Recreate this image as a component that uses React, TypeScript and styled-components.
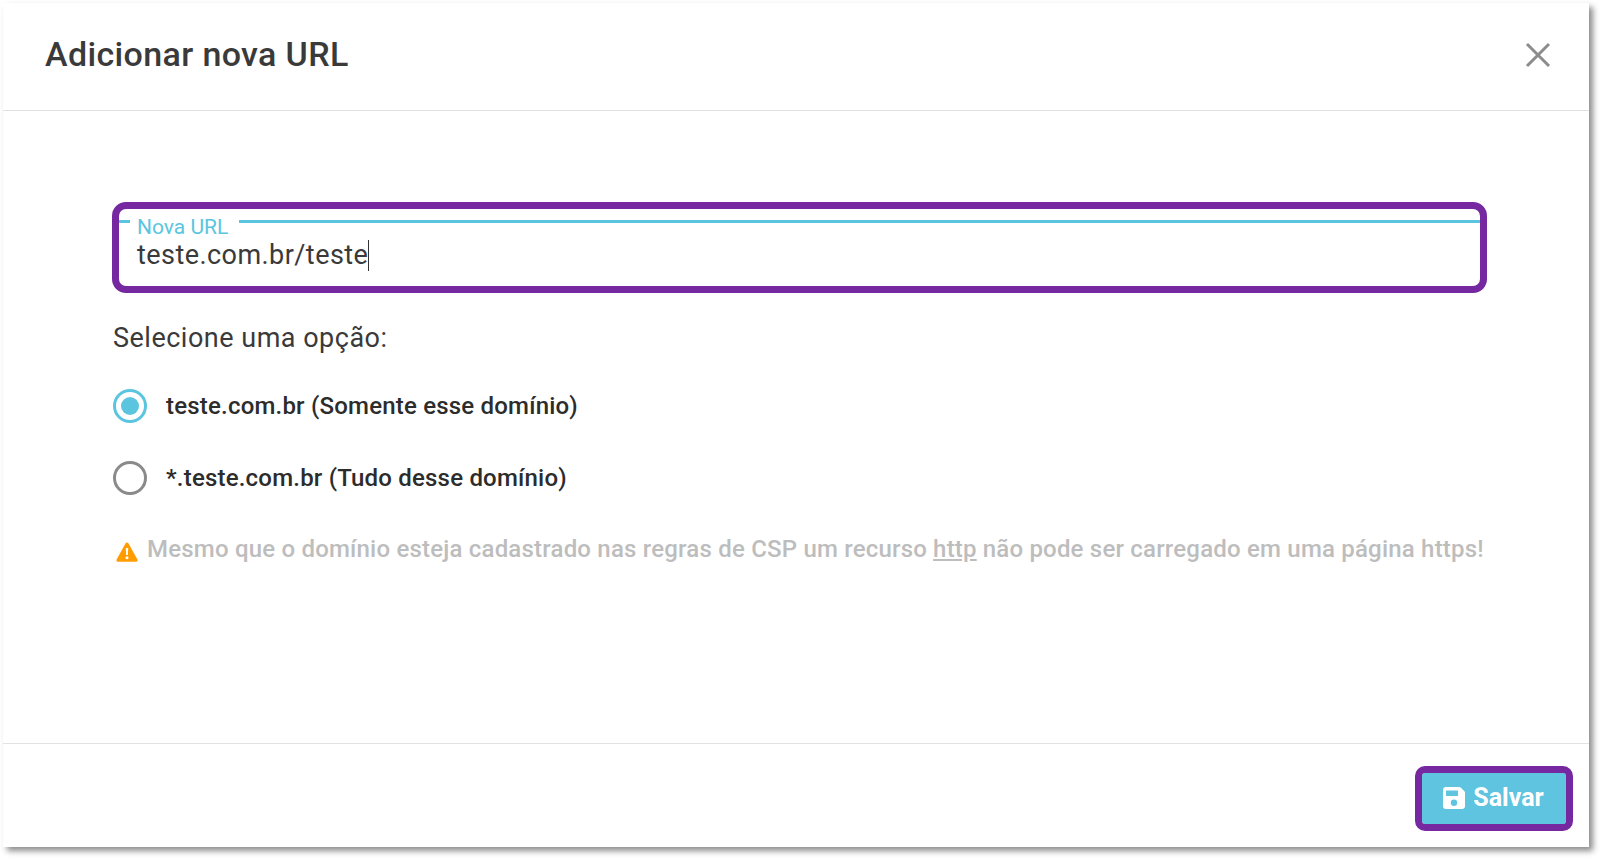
import styled, { createGlobalStyle } from 'styled-components';

const GlobalStyle = createGlobalStyle`
  html, body {
    margin: 0;
    padding: 0;
    background: #fff;
    font-family: Roboto, "Liberation Sans", sans-serif;
  }
`;

const Page = styled.div`
  width: 1600px;
  height: 858px;
  padding: 3px 0 0 3px;
  box-sizing: border-box;
  overflow: hidden;
`;

const Dialog = styled.div`
  width: 1586px;
  height: 844px;
  display: flex;
  flex-direction: column;
  background: #fff;
  box-shadow: 4px 4px 6px rgba(0, 0, 0, 0.45);
`;

const Header = styled.header`
  height: 108px;
  box-sizing: border-box;
  flex: none;
  display: flex;
  align-items: center;
  justify-content: space-between;
  padding: 0 38px 4px 42px;
  border-bottom: 1px solid #e2e2e2;
`;

const Title = styled.h1`
  margin: -2px 0 0;
  font-size: 34px;
  font-weight: 500;
  letter-spacing: 0.36px;
  color: #3a3a3a;
`;

const CloseButton = styled.button`
  border: 0;
  padding: 0;
  background: none;
  display: flex;
`;

const Body = styled.main`
  flex: 1;
  padding: 91px 102px 0 110px;
`;

const FieldFrame = styled.div`
  height: 91px;
  box-sizing: border-box;
  margin-left: -1px;
  border: 7px solid #7628a0;
  border-radius: 14px;
  padding-top: 11px;
`;

const LabelRow = styled.div`
  display: flex;
  align-items: flex-start;
  height: 18px;
`;

const Rule = styled.span<{ $grow?: boolean }>`
  height: 3px;
  background: #5bc5e0;
  flex: ${(p) => (p.$grow ? '1' : '0 0 11px')};
`;

const FieldLabel = styled.label`
  padding: 0 11px 0 7px;
  font-size: 21px;
  line-height: 15px;
  color: #5bc5e0;
`;

const FieldValue = styled.div`
  display: flex;
  align-items: center;
  margin-left: 18px;
  font-size: 27px;
  letter-spacing: 0.44px;
  line-height: 34px;
  color: #3a3a3a;
`;

const Caret = styled.span`
  width: 1px;
  height: 31px;
  background: #333;
`;

const Prompt = styled.p`
  margin: 28px 0 0;
  font-size: 27px;
  letter-spacing: 0.5px;
  line-height: 34px;
  color: #3a3a3a;
`;

const Options = styled.div`
  display: flex;
  flex-direction: column;
  gap: 38px;
  margin-top: 34px;
`;

const Option = styled.label`
  display: flex;
  align-items: center;
  gap: 19px;
  font-size: 24px;
  font-weight: 500;
  letter-spacing: 0.2px;
  line-height: 34px;
  color: #2c2c2c;
`;

const Radio = styled.span<{ $checked?: boolean }>`
  width: 34px;
  height: 34px;
  box-sizing: border-box;
  border-radius: 50%;
  border: 3px solid ${(p) => (p.$checked ? '#5bc5e0' : '#8a8a8a')};
  display: flex;
  align-items: center;
  justify-content: center;

  &::after {
    content: '';
    width: 18px;
    height: 18px;
    border-radius: 50%;
    background: ${(p) => (p.$checked ? '#5bc5e0' : 'transparent')};
  }
`;

const Warning = styled.p`
  display: flex;
  align-items: center;
  gap: 9px;
  margin: 37px 0 0 3px;
  font-size: 24px;
  font-weight: 500;
  letter-spacing: 0.2px;
  line-height: 34px;
  color: #bdbdbd;
  white-space: nowrap;

  svg {
    margin-top: 6px;
  }
`;

const WarningLink = styled.u`
  margin: 0 0.25em;
`;

const Footer = styled.footer`
  height: 81px;
  flex: none;
  display: flex;
  justify-content: flex-end;
  align-items: flex-start;
  padding: 22px 16px 0 0;
  border-top: 1px solid #e2e2e2;
`;

const SaveButton = styled.button`
  width: 158px;
  height: 65px;
  box-sizing: border-box;
  border: 7px solid #7628a0;
  border-radius: 10px;
  background: #5fc4df;
  background-clip: padding-box;
  display: flex;
  align-items: center;
  justify-content: center;
  gap: 8px;
  padding: 0 1px 2px 0;
  font-family: inherit;
  font-size: 25px;
  font-weight: 700;
  color: #fff;
`;

export default function App() {
  return (
    <>
      <GlobalStyle />
      <Page>
        <Dialog>
          <Header>
            <Title>Adicionar nova URL</Title>
            <CloseButton type="button" aria-label="Fechar">
              <svg width="26" height="26" viewBox="0 0 26 26" fill="none" stroke="#8c8c8c" strokeWidth="3">
                <path d="M2 2 24 24M24 2 2 24" />
              </svg>
            </CloseButton>
          </Header>
          <Body>
            <FieldFrame>
              <LabelRow>
                <Rule />
                <FieldLabel>Nova URL</FieldLabel>
                <Rule $grow />
              </LabelRow>
              <FieldValue>
                teste.com.br/teste
                <Caret />
              </FieldValue>
            </FieldFrame>
            <Prompt>Selecione uma opção:</Prompt>
            <Options>
              <Option>
                <Radio $checked />
                teste.com.br (Somente esse domínio)
              </Option>
              <Option>
                <Radio />
                *.teste.com.br (Tudo desse domínio)
              </Option>
            </Options>
            <Warning>
              <svg width="22" height="20" viewBox="0 0 22 20">
                <path d="M11 0.5c.6 0 1.1.3 1.4.8l9 16.2c.6 1-.1 2.2-1.3 2.2H1.9C.7 19.7 0 18.5.6 17.5l9-16.2c.3-.5.8-.8 1.4-.8z" fill="#ff9d00" />
                <path d="M9.8 6h2.4l-.3 7h-1.8zM11 14.2a1.5 1.5 0 1 1 0 3 1.5 1.5 0 0 1 0-3z" fill="#fff" />
              </svg>
              <span>
                Mesmo que o domínio esteja cadastrado nas regras de CSP um recurso
                <WarningLink>http</WarningLink>
                não pode ser carregado em uma página https!
              </span>
            </Warning>
          </Body>
          <Footer>
            <SaveButton type="button">
              <svg width="22" height="22" viewBox="0 0 22 22">
                <path
                  fillRule="evenodd"
                  fill="#fff"
                  d="M3 0h13.2c.6 0 1.1.2 1.5.6l3.7 3.7c.4.4.6.9.6 1.5V19a3 3 0 0 1-3 3H3a3 3 0 0 1-3-3V3a3 3 0 0 1 3-3zm0 4v4.5c0 .3.2.5.5.5h11c.3 0 .5-.2.5-.5V4c0-.3-.2-.5-.5-.5h-11c-.3 0-.5.2-.5.5zm8 8.5a3.2 3.2 0 1 0 0 6.4 3.2 3.2 0 0 0 0-6.4z"
                />
              </svg>
              Salvar
            </SaveButton>
          </Footer>
        </Dialog>
      </Page>
    </>
  );
}
